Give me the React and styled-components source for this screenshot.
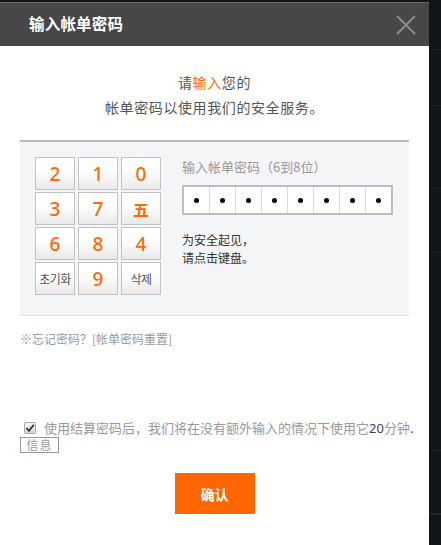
import React from "react";
import styled, { createGlobalStyle } from "styled-components";

const Global = createGlobalStyle`
  html, body { margin: 0; padding: 0; background: #111517; }
  body { font-family: "Noto Sans CJK SC", "Noto Sans", sans-serif; }
  * { box-sizing: border-box; }
`;

const Page = styled.div`
  display: flex;
  width: 441px;
  height: 545px;
  overflow: hidden;
  background: #111517;
`;

const Dialog = styled.div`
  width: 429px;
  margin-top: 2px;
  background: #fff;
  display: flex;
  flex-direction: column;
`;

const Strip = styled.div`
  flex: 1;
  background:
    linear-gradient(#1c2022, #1c2022) 0 49px / 100% 1px no-repeat,
    linear-gradient(#1c2022, #1c2022) 0 105px / 100% 1px no-repeat,
    linear-gradient(#1c2022, #1c2022) 0 188px / 100% 1px no-repeat,
    linear-gradient(#1c2022, #1c2022) 0 252px / 100% 1px no-repeat,
    linear-gradient(#1c2022, #1c2022) 0 450px / 100% 1px no-repeat,
    linear-gradient(#1f2325, #1f2325) 0 513px / 100% 2px no-repeat,
    #111517;
`;

const Header = styled.div`
  height: 44px;
  background: #474747;
  border-top: 1px solid #6a6a6a;
  display: flex;
  align-items: center;
  justify-content: space-between;
  padding: 0 12px 4px 29px;
`;

const Title = styled.h1`
  margin: 0;
  color: #fff;
  font-size: 15.5px;
  font-weight: 700;
  letter-spacing: 0.2px;
`;

const Close = styled.button`
  border: 0;
  background: none;
  padding: 0;
  width: 22px;
  height: 22px;
  display: flex;
  align-items: center;
  justify-content: center;
  margin-top: 4px;
`;

const Body = styled.div`
  padding: 0 20px;
  display: flex;
  flex-direction: column;
`;

const Intro = styled.p`
  margin: 24px 0 20px;
  text-align: center;
  color: #555;
  font-size: 14px;
  line-height: 25px;
  letter-spacing: 0.6px;
`;

const Accent = styled.span`
  color: #ff6a00;
`;

const Panel = styled.div`
  background: #f4f5f7;
  border-top: 2px solid #bcbcbe;
  border-bottom: 1px solid #e2e3e5;
  height: 176px;
  padding: 15px 15px 0;
  display: flex;
  gap: 21px;
`;

const Keypad = styled.div`
  display: grid;
  grid-template-columns: repeat(3, 40px);
  grid-auto-rows: 33px;
  column-gap: 3px;
  row-gap: 2px;
  align-content: start;
`;

const Key = styled.button`
  border: 1px solid #c2c2c2;
  background: linear-gradient(#ffffff 0%, #ffffff 40%, #e9e9e9 100%);
  padding: 0;
  display: flex;
  align-items: center;
  justify-content: center;
  color: ${(p) => (p.$small ? "#555" : "#ff6a00")};
  font-family: ${(p) =>
    p.$small
      ? '"Noto Sans CJK KR", "Noto Sans", sans-serif'
      : p.$han
      ? '"Noto Sans CJK SC", sans-serif'
      : '"Noto Sans", sans-serif'};
  font-size: ${(p) => (p.$small ? "12px" : p.$han ? "16px" : "19px")};
  font-weight: ${(p) => (p.$han ? 700 : p.$small ? 400 : 500)};
  letter-spacing: ${(p) => (p.$small ? "-0.5px" : "0")};
`;

const Side = styled.div`
  display: flex;
  flex-direction: column;
`;

const FieldLabel = styled.div`
  color: #999;
  font-size: 13px;
  line-height: 18px;
  margin-top: 1px;
`;

const PinBox = styled.div`
  margin-top: 9px;
  width: 211px;
  height: 30px;
  border: 2px solid #bdbdbd;
  background: #dcdcdc;
  display: grid;
  grid-template-columns: repeat(8, 1fr);
  gap: 1px;
`;

const PinCell = styled.div`
  background: #fff;
  display: flex;
  align-items: center;
  justify-content: center;
  &::after {
    content: "";
    width: 5px;
    height: 5px;
    border-radius: 50%;
    background: #000;
  }
`;

const Hint = styled.div`
  margin-top: 16px;
  display: flex;
  flex-direction: column;
  color: #333;
  font-size: 12px;
`;

const HintLine = styled.span`
  display: block;
  height: 17.5px;
  line-height: 17.5px;
`;

const Forgot = styled.div`
  margin-top: 14px;
  color: #999;
  font-size: 12px;
  line-height: 18px;
`;

const Consent = styled.div`
  margin-top: 72px;
  margin-right: -8px;
  color: #999;
  font-size: 13px;
  line-height: 16px;
`;

const CheckRow = styled.label`
  display: flex;
  align-items: center;
  gap: 8px;
  white-space: nowrap;
`;

const Check = styled.span`
  width: 12px;
  height: 12px;
  margin-left: 4px;
  border: 1px solid #aaa;
  border-radius: 2px;
  background: linear-gradient(#f4f4f4, #d8d8d8);
  display: flex;
  align-items: center;
  justify-content: center;
`;

const Dark = styled.span`
  color: #444;
  font-family: "Noto Sans", sans-serif;
  font-weight: 400;
`;

const InfoTag = styled.span`
  display: inline-block;
  margin-top: 1px;
  width: 39px;
  height: 16px;
  border: 1px solid #999;
  color: #999;
  font-size: 12px;
  line-height: 14px;
  text-align: center;
  letter-spacing: 1px;
`;

const Footer = styled.div`
  display: flex;
  justify-content: center;
  margin-top: 20px;
`;

const Confirm = styled.button`
  width: 80px;
  height: 41px;
  border: 0;
  background: #ff6600;
  color: #fff;
  font-family: "Noto Sans CJK SC", sans-serif;
  font-size: 14px;
  font-weight: 700;
`;

const keys = [
  { t: "2" }, { t: "1" }, { t: "0" },
  { t: "3" }, { t: "7" }, { t: "五", han: true },
  { t: "6" }, { t: "8" }, { t: "4" },
  { t: "초기화", small: true }, { t: "9" }, { t: "삭제", small: true },
];

export default function App() {
  return (
    <>
      <Global />
      <Page>
        <Dialog>
          <Header>
            <Title>输入帐单密码</Title>
            <Close aria-label="close">
              <svg width="20" height="20" viewBox="0 0 20 20">
                <path d="M1 1 L19 19 M19 1 L1 19" stroke="#8c8c8c" strokeWidth="2" />
              </svg>
            </Close>
          </Header>
          <Body>
            <Intro>
              请<Accent>输入</Accent>您的
              <br />
              帐单密码以使用我们的安全服务。
            </Intro>
            <Panel>
              <Keypad>
                {keys.map((k, i) => (
                  <Key key={i} $small={k.small} $han={k.han}>
                    {k.t}
                  </Key>
                ))}
              </Keypad>
              <Side>
                <FieldLabel>输入帐单密码（6到8位）</FieldLabel>
                <PinBox>
                  {Array.from({ length: 8 }).map((_, i) => (
                    <PinCell key={i} />
                  ))}
                </PinBox>
                <Hint>
                  <HintLine>为安全起见，</HintLine>
                  <HintLine>请点击键盘。</HintLine>
                </Hint>
              </Side>
            </Panel>
            <Forgot>※忘记密码？[帐单密码重置]</Forgot>
            <Consent>
              <CheckRow>
                <Check>
                  <svg width="10" height="10" viewBox="0 0 10 10">
                    <path d="M1.5 5.2 L4 7.8 L8.8 1.8" stroke="#333" strokeWidth="1.8" fill="none" />
                  </svg>
                </Check>
                <span>
                  使用结算密码后，我们将在没有额外输入的情况下使用它<Dark>20</Dark>分钟<Dark>.</Dark>
                </span>
              </CheckRow>
              <InfoTag>信息</InfoTag>
            </Consent>
            <Footer>
              <Confirm>确认</Confirm>
            </Footer>
          </Body>
        </Dialog>
        <Strip />
      </Page>
    </>
  );
}
